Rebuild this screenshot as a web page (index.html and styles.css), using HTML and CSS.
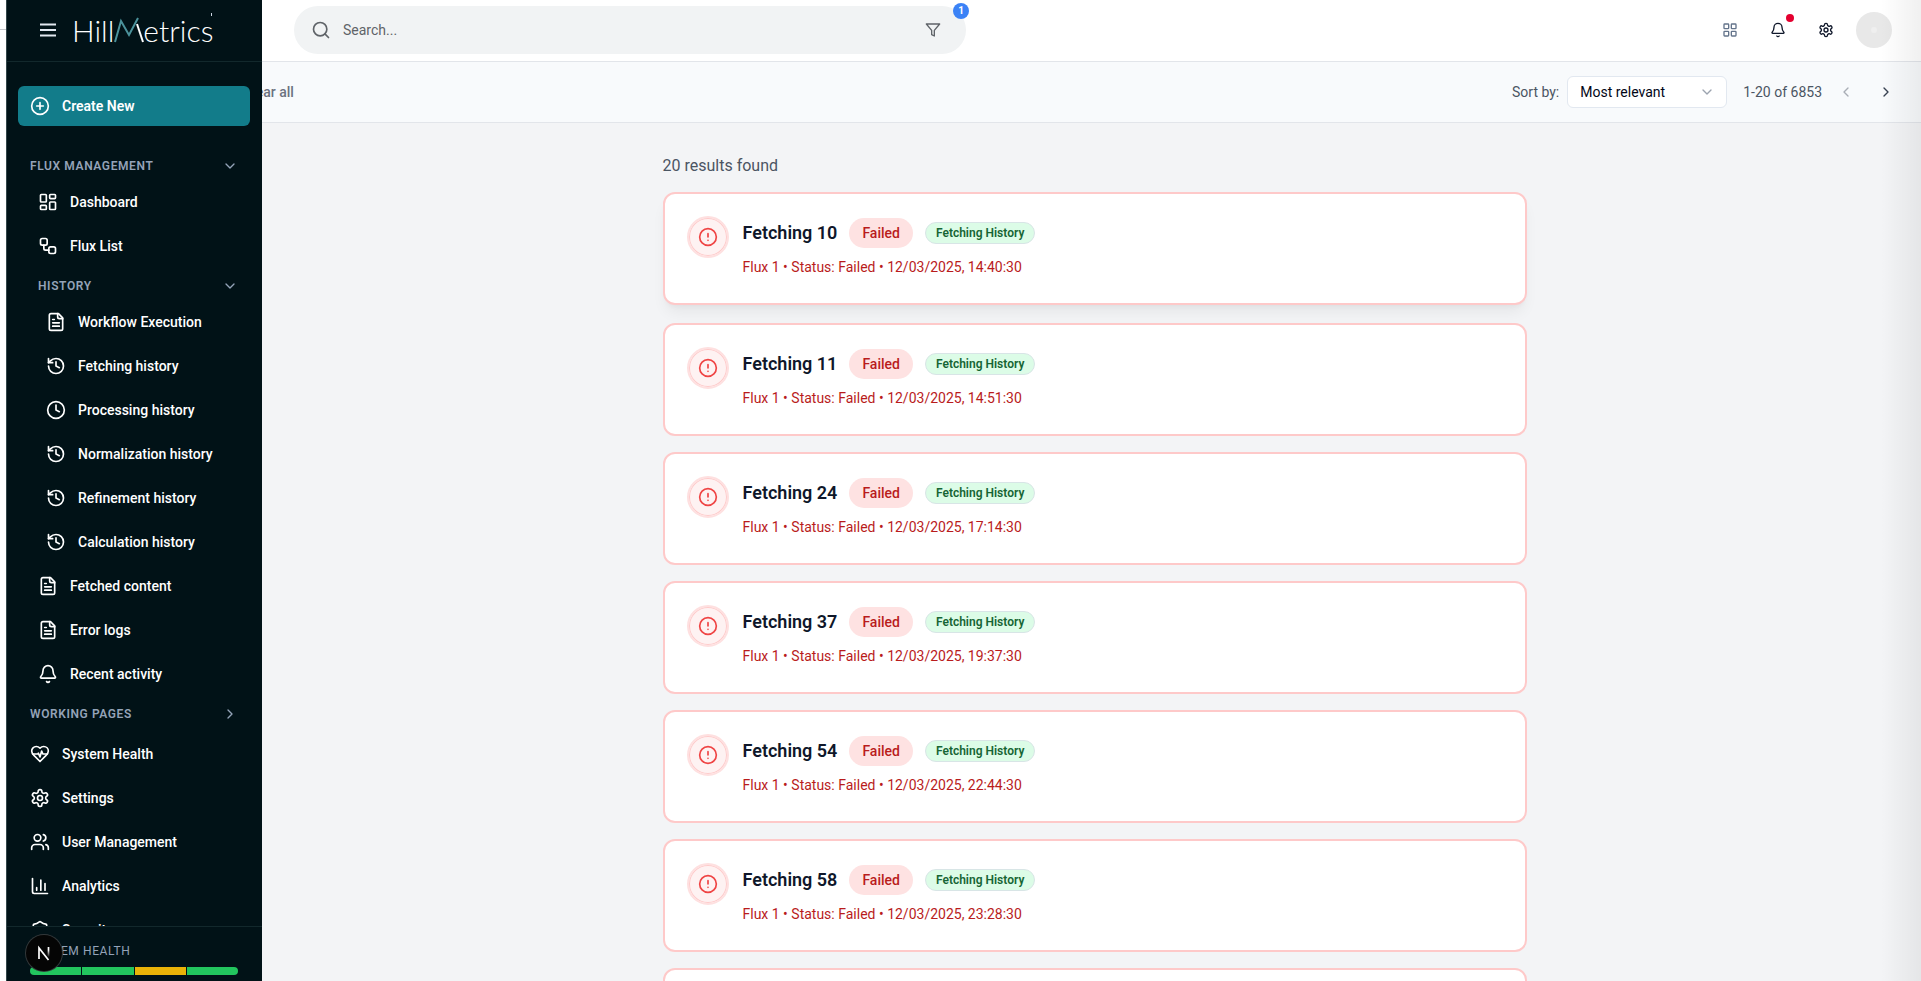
FILE: index.html
```html
<!DOCTYPE html>
<html lang="en">
<head>
<meta charset="utf-8">
<meta name="viewport" content="width=device-width, initial-scale=1">
<title>HillMetrics</title>
<link rel="stylesheet" href="styles.css">
</head>
<body>
<svg class="sprite" aria-hidden="true">
  <symbol id="i-plus" viewBox="0 0 24 24"><circle cx="12" cy="12" r="10"/><path d="M8 12h8M12 8v8"/></symbol>
  <symbol id="i-down" viewBox="0 0 24 24"><path d="m6 9 6 6 6-6"/></symbol>
  <symbol id="i-right" viewBox="0 0 24 24"><path d="m9 18 6-6-6-6"/></symbol>
  <symbol id="i-left" viewBox="0 0 24 24"><path d="m15 18-6-6 6-6"/></symbol>
  <symbol id="i-dashboard" viewBox="0 0 24 24"><rect width="7" height="9" x="3" y="3" rx="1"/><rect width="7" height="5" x="14" y="3" rx="1"/><rect width="7" height="9" x="14" y="12" rx="1"/><rect width="7" height="5" x="3" y="16" rx="1"/></symbol>
  <symbol id="i-flow" viewBox="0 0 24 24"><rect width="8" height="8" x="3" y="3" rx="2"/><path d="M7 11v4a2 2 0 0 0 2 2h4"/><rect width="8" height="8" x="13" y="13" rx="2"/></symbol>
  <symbol id="i-file" viewBox="0 0 24 24"><path d="M15 2H6a2 2 0 0 0-2 2v16a2 2 0 0 0 2 2h12a2 2 0 0 0 2-2V7Z"/><path d="M14 2v4a2 2 0 0 0 2 2h4M10 9H8M16 13H8M16 17H8"/></symbol>
  <symbol id="i-history" viewBox="0 0 24 24"><path d="M3 12a9 9 0 1 0 9-9 9.75 9.75 0 0 0-6.74 2.74L3 8"/><path d="M3 3v5h5M12 7v5l4 2"/></symbol>
  <symbol id="i-clock" viewBox="0 0 24 24"><circle cx="12" cy="12" r="10"/><path d="M12 6v6l4 2"/></symbol>
  <symbol id="i-bell" viewBox="0 0 24 24"><path d="M10.268 21a2 2 0 0 0 3.464 0"/><path d="M3.262 15.326A1 1 0 0 0 4 17h16a1 1 0 0 0 .74-1.673C19.41 13.956 18 12.499 18 8A6 6 0 0 0 6 8c0 4.499-1.411 5.956-2.738 7.326"/></symbol>
  <symbol id="i-heart" viewBox="0 0 24 24"><path d="M19 14c1.49-1.46 3-3.21 3-5.5A5.5 5.5 0 0 0 16.5 3c-1.76 0-3 .5-4.5 2-1.5-1.5-2.74-2-4.5-2A5.5 5.5 0 0 0 2 8.5c0 2.3 1.5 4.05 3 5.5l7 7Z"/><path d="M3.22 12H9.5l.5-1 2 4.5 2-7 1.5 3.5h5.27"/></symbol>
  <symbol id="i-gear" viewBox="0 0 24 24"><path d="M12.22 2h-.44a2 2 0 0 0-2 2v.18a2 2 0 0 1-1 1.73l-.43.25a2 2 0 0 1-2 0l-.15-.08a2 2 0 0 0-2.73.73l-.22.38a2 2 0 0 0 .73 2.73l.15.1a2 2 0 0 1 1 1.72v.51a2 2 0 0 1-1 1.74l-.15.09a2 2 0 0 0-.73 2.73l.22.38a2 2 0 0 0 2.73.73l.15-.08a2 2 0 0 1 2 0l.43.25a2 2 0 0 1 1 1.73V20a2 2 0 0 0 2 2h.44a2 2 0 0 0 2-2v-.18a2 2 0 0 1 1-1.73l.43-.25a2 2 0 0 1 2 0l.15.08a2 2 0 0 0 2.73-.73l.22-.39a2 2 0 0 0-.73-2.73l-.15-.08a2 2 0 0 1-1-1.74v-.5a2 2 0 0 1 1-1.74l.15-.09a2 2 0 0 0 .73-2.73l-.22-.38a2 2 0 0 0-2.73-.73l-.15.08a2 2 0 0 1-2 0l-.43-.25a2 2 0 0 1-1-1.73V4a2 2 0 0 0-2-2z"/><circle cx="12" cy="12" r="3"/></symbol>
  <symbol id="i-users" viewBox="0 0 24 24"><path d="M16 21v-2a4 4 0 0 0-4-4H6a4 4 0 0 0-4 4v2"/><circle cx="9" cy="7" r="4"/><path d="M22 21v-2a4 4 0 0 0-3-3.870M16 3.130a4 4 0 0 1 0 7.750"/></symbol>
  <symbol id="i-chart" viewBox="0 0 24 24"><path d="M3 3v16a2 2 0 0 0 2 2h16M18 17V9M13 17V5M8 17v-3"/></symbol>
  <symbol id="i-shield" viewBox="0 0 24 24"><path d="M20 13c0 5-3.5 7.5-7.66 8.95a1 1 0 0 1-.67-.01C7.5 20.5 4 18 4 13V6a1 1 0 0 1 1-1c2 0 4.500-1.200 6.240-2.720a1.170 1.170 0 0 1 1.520 0C14.510 3.810 17 5 19 5a1 1 0 0 1 1 1z"/></symbol>
  <symbol id="i-search" viewBox="0 0 24 24"><circle cx="11" cy="11" r="8"/><path d="m21 21-4.300-4.300"/></symbol>
  <symbol id="i-filter" viewBox="0 0 24 24"><path d="M22 3H2l8 9.460V19l4 2v-8.540z"/></symbol>
  <symbol id="i-grid" viewBox="0 0 24 24"><rect width="7" height="7" x="3" y="3" rx="1"/><rect width="7" height="7" x="14" y="3" rx="1"/><rect width="7" height="7" x="14" y="14" rx="1"/><rect width="7" height="7" x="3" y="14" rx="1"/></symbol>
  <symbol id="i-alert" viewBox="0 0 24 24"><circle cx="12" cy="12" r="10"/><path d="M12 8v4M12 16h.01"/></symbol>
</svg>

<div class="page">
  <div class="gutter"><span class="gutter-line"></span></div>
  <div class="app">
    <aside class="sidebar">
      <div class="brand">
        <button class="menu-button" type="button" aria-label="Toggle menu">
          <svg class="menu-icon" viewBox="0 0 16 16"><path d="M0 2.500h16M0 8h16M0 13.500h16"/></svg>
        </button>
        <a class="logo" href="#" aria-label="HillMetrics">
          <span>Hill</span><svg class="logo-m" viewBox="0 0 28 28"><path class="logo-teal" d="M1 26 7 5l8 14L24 2"/><path class="logo-white" d="M23 8l6 18"/></svg><span>etrics</span>
        </a>
      </div>
      <div class="nav-scroll">
        <button class="create" type="button"><svg class="icon"><use href="#i-plus"/></svg>Create New</button>
        <nav class="nav">
          <button class="group" type="button">Flux Management<svg class="icon icon-sm"><use href="#i-down"/></svg></button>
          <ul class="items level-2">
            <li><a class="item" href="#"><svg class="icon"><use href="#i-dashboard"/></svg>Dashboard</a></li>
            <li><a class="item" href="#"><svg class="icon"><use href="#i-flow"/></svg>Flux List</a></li>
            <li>
              <button class="group" type="button">History<svg class="icon icon-sm"><use href="#i-down"/></svg></button>
              <ul class="items level-3">
                <li><a class="item" href="#"><svg class="icon"><use href="#i-file"/></svg>Workflow Execution</a></li>
                <li><a class="item" href="#"><svg class="icon"><use href="#i-history"/></svg>Fetching history</a></li>
                <li><a class="item" href="#"><svg class="icon"><use href="#i-clock"/></svg>Processing history</a></li>
                <li><a class="item" href="#"><svg class="icon"><use href="#i-history"/></svg>Normalization history</a></li>
                <li><a class="item" href="#"><svg class="icon"><use href="#i-history"/></svg>Refinement history</a></li>
                <li><a class="item" href="#"><svg class="icon"><use href="#i-history"/></svg>Calculation history</a></li>
              </ul>
            </li>
            <li><a class="item" href="#"><svg class="icon"><use href="#i-file"/></svg>Fetched content</a></li>
            <li><a class="item" href="#"><svg class="icon"><use href="#i-file"/></svg>Error logs</a></li>
            <li><a class="item" href="#"><svg class="icon"><use href="#i-bell"/></svg>Recent activity</a></li>
          </ul>
          <ul class="items level-1">
            <li><button class="group" type="button">Working Pages<svg class="icon icon-sm"><use href="#i-right"/></svg></button></li>
            <li><a class="item" href="#"><svg class="icon"><use href="#i-heart"/></svg>System Health</a></li>
            <li><a class="item" href="#"><svg class="icon"><use href="#i-gear"/></svg>Settings</a></li>
            <li><a class="item" href="#"><svg class="icon"><use href="#i-users"/></svg>User Management</a></li>
            <li><a class="item" href="#"><svg class="icon"><use href="#i-chart"/></svg>Analytics</a></li>
            <li><a class="item" href="#"><svg class="icon"><use href="#i-shield"/></svg>Security</a></li>
          </ul>
        </nav>
      </div>
      <div class="health">
        <div class="health-title">SYSTEM HEALTH</div>
        <div class="health-bar"><span></span><span></span><span class="warn"></span><span></span></div>
        <button class="dev-badge" type="button" aria-label="Developer tools">
          <svg viewBox="0 0 36 36">
            <defs>
              <linearGradient id="fade" gradientUnits="userSpaceOnUse" x1="0" y1="12" x2="0" y2="22"><stop offset="0.300" stop-color="#fff"/><stop offset="1" stop-color="#fff" stop-opacity="0"/></linearGradient>
            </defs>
            <path d="M13 24V13L22.500 25" fill="none" stroke="#fff" stroke-width="1.700"/>
            <path d="M22.500 12v10" fill="none" stroke="url(#fade)" stroke-width="1.700"/>
          </svg>
        </button>
      </div>
    </aside>

    <div class="content">
      <header class="topbar">
        <form class="search" role="search">
          <svg class="icon"><use href="#i-search"/></svg>
          <input class="search-input" type="text" placeholder="Search..." aria-label="Search">
          <button class="filter" type="button" aria-label="Filters"><svg class="icon icon-sm"><use href="#i-filter"/></svg></button>
          <span class="count">1</span>
        </form>
        <div class="actions">
          <button class="action muted" type="button" aria-label="Apps"><svg class="icon icon-sm"><use href="#i-grid"/></svg></button>
          <button class="action" type="button" aria-label="Notifications"><svg class="icon icon-sm"><use href="#i-bell"/></svg><span class="dot"></span></button>
          <button class="action" type="button" aria-label="Settings"><svg class="icon icon-sm"><use href="#i-gear"/></svg></button>
          <button class="avatar" type="button" aria-label="Account"><span></span></button>
        </div>
      </header>

      <div class="toolbar">
        <button class="clear" type="button">Clear all</button>
        <div class="sorting">
          <label for="sort">Sort by:</label>
          <span class="select-box">
            <select id="sort" class="select"><option>Most relevant</option></select>
            <svg class="icon icon-sm"><use href="#i-down"/></svg>
          </span>
          <span class="range">1-20 of 6853</span>
          <button class="pager" type="button" aria-label="Previous page" disabled><svg class="icon icon-sm"><use href="#i-left"/></svg></button>
          <button class="pager" type="button" aria-label="Next page"><svg class="icon icon-sm"><use href="#i-right"/></svg></button>
        </div>
      </div>

      <main class="results">
        <p class="found">20 results found</p>
        <article class="card raised"><span class="status"><svg class="icon"><use href="#i-alert"/></svg></span><div class="info"><div class="head"><h2>Fetching 10</h2><span class="failed">Failed</span><span class="kind">Fetching History</span></div><p>Flux 1 • Status: Failed • 12/03/2025, 14:40:30</p></div></article>
        <article class="card"><span class="status"><svg class="icon"><use href="#i-alert"/></svg></span><div class="info"><div class="head"><h2>Fetching 11</h2><span class="failed">Failed</span><span class="kind">Fetching History</span></div><p>Flux 1 • Status: Failed • 12/03/2025, 14:51:30</p></div></article>
        <article class="card"><span class="status"><svg class="icon"><use href="#i-alert"/></svg></span><div class="info"><div class="head"><h2>Fetching 24</h2><span class="failed">Failed</span><span class="kind">Fetching History</span></div><p>Flux 1 • Status: Failed • 12/03/2025, 17:14:30</p></div></article>
        <article class="card"><span class="status"><svg class="icon"><use href="#i-alert"/></svg></span><div class="info"><div class="head"><h2>Fetching 37</h2><span class="failed">Failed</span><span class="kind">Fetching History</span></div><p>Flux 1 • Status: Failed • 12/03/2025, 19:37:30</p></div></article>
        <article class="card"><span class="status"><svg class="icon"><use href="#i-alert"/></svg></span><div class="info"><div class="head"><h2>Fetching 54</h2><span class="failed">Failed</span><span class="kind">Fetching History</span></div><p>Flux 1 • Status: Failed • 12/03/2025, 22:44:30</p></div></article>
        <article class="card"><span class="status"><svg class="icon"><use href="#i-alert"/></svg></span><div class="info"><div class="head"><h2>Fetching 58</h2><span class="failed">Failed</span><span class="kind">Fetching History</span></div><p>Flux 1 • Status: Failed • 12/03/2025, 23:28:30</p></div></article>
        <article class="card"></article>
      </main>
    </div>
  </div>
  <div class="edge-shade"></div>
</div>
</body>
</html>
```

FILE: styles.css
```css
* { box-sizing: border-box; }

body {
  margin: 0;
  font-family: Roboto, "Liberation Sans", sans-serif;
  font-size: 14px;
  line-height: 20px;
  color: #0f172a;
  background: #fff;
}

button {
  font: inherit;
  color: inherit;
  background: none;
  border: 0;
  padding: 0;
}

a { color: inherit; text-decoration: none; }
ul { list-style: none; margin: 0; padding: 0; }
h2, p { margin: 0; }

.sprite { display: none; }

.icon {
  flex: none;
  width: 20px;
  height: 20px;
  fill: none;
  stroke: currentColor;
  stroke-width: 2;
  stroke-linecap: round;
  stroke-linejoin: round;
}
.icon-sm { width: 16px; height: 16px; }

.page {
  position: relative;
  display: flex;
  height: 100vh;
  overflow: hidden;
}

.gutter { flex: none; width: 6px; padding-top: 29px; }
.gutter-line { display: block; height: 1px; background: #c4c6ca; }

.app { flex: 0 0 100%; display: flex; min-width: 0; }

/* Sidebar */
.sidebar {
  position: relative;
  z-index: 1;
  flex: none;
  display: flex;
  flex-direction: column;
  width: 256px;
  color: #fff;
  background: #011217;
  border-left: 1px solid #33464a;
}

.brand {
  flex: none;
  display: flex;
  align-items: center;
  gap: 16px;
  height: 62px;
  padding: 0 0 1px 33px;
  border-bottom: 1px solid #12282c;
}
.menu-icon {
  display: block;
  width: 16px;
  height: 16px;
  stroke: #e2e8f0;
  stroke-width: 2;
}
.logo {
  position: relative;
  display: flex;
  align-items: center;
  font-family: Lato, sans-serif;
  font-weight: 300;
  font-size: 30px;
  line-height: 36px;
}
.logo::after {
  content: "";
  position: absolute;
  top: 1px;
  right: 1px;
  width: 1px;
  height: 3px;
  background: #cbd5e1;
}
.logo-m { width: 28px; height: 28px; margin: 0 1px 0 0; overflow: visible; fill: none; stroke-width: 2; }
.logo-teal { stroke: #4b929b; }
.logo-white { stroke: #fff; }

.nav-scroll { flex: 1; min-height: 0; overflow: hidden; padding: 24px 12px 0 11px; }

.create {
  display: flex;
  align-items: center;
  gap: 12px;
  width: 100%;
  height: 40px;
  padding: 0 12px;
  border-radius: 6px;
  background: #127c8a;
  font-weight: 600;
}

.nav { padding: 24px 12px 0; }
.group {
  display: flex;
  align-items: center;
  justify-content: space-between;
  width: 100%;
  height: 32px;
  color: #94a3b8;
  font-size: 12px;
  font-weight: 600;
  letter-spacing: 0.600px;
  text-transform: uppercase;
}
.items { display: flex; flex-direction: column; gap: 4px; }
.level-1 { padding-top: 4px; }
.level-2 { padding-left: 8px; }
.level-3 { padding-left: 8px; }
.item {
  display: flex;
  align-items: center;
  gap: 12px;
  height: 40px;
  font-weight: 500;
  white-space: nowrap;
}

.health {
  position: relative;
  flex: none;
  padding: 14px 24px 6px 23px;
  border-top: 1px solid #12282c;
}
.health-title { color: #94a3b8; font-size: 12px; letter-spacing: 0.600px; }
.health-bar {
  display: flex;
  gap: 1px;
  height: 8px;
  margin-top: 6px;
  border-radius: 4px;
  overflow: hidden;
}
.health-bar span { flex: 1; background: #22c55e; }
.health-bar .warn { background: #eab308; }
.dev-badge {
  position: absolute;
  left: 19px;
  top: 8px;
  width: 36px;
  height: 36px;
  border-radius: 50%;
  background: #050505;
  box-shadow: 0 0 0 1px #33383a;
}
.dev-badge svg { display: block; }

/* Content */
.content {
  flex: 1;
  min-width: 0;
  display: flex;
  flex-direction: column;
  background: #f3f4f6;
}

.topbar {
  flex: none;
  display: flex;
  align-items: center;
  justify-content: space-between;
  height: 62px;
  padding: 0 35px 1px 32px;
  background: #fff;
  border-bottom: 1px solid #e2e5ea;
}

.search {
  position: relative;
  display: flex;
  align-items: center;
  gap: 12px;
  flex: 0 1 672px;
  height: 48px;
  padding: 0 25px 0 17px;
  border-radius: 24px;
  background: #f1f3f4;
  color: #5f6368;
}
.search-input {
  flex: 1;
  min-width: 0;
  border: 0;
  padding: 0;
  background: none;
  font: inherit;
  color: inherit;
}
.search-input::placeholder { color: #5f6368; opacity: 1; }
.filter { display: flex; }
.count {
  position: absolute;
  top: -3px;
  right: -3px;
  width: 16px;
  height: 16px;
  border-radius: 50%;
  background: #3b82f6;
  color: #fff;
  font-size: 10px;
  font-weight: 700;
  line-height: 16px;
  text-align: center;
}

.actions { display: flex; align-items: center; gap: 8px; }
.action {
  position: relative;
  display: flex;
  align-items: center;
  justify-content: center;
  width: 40px;
  height: 40px;
}
.muted { color: #64748b; }
.dot {
  position: absolute;
  top: 4px;
  right: 4px;
  width: 8px;
  height: 8px;
  border-radius: 50%;
  background: #e4002f;
}
.avatar {
  display: flex;
  align-items: center;
  justify-content: center;
  width: 36px;
  height: 36px;
  margin-left: 2px;
  border-radius: 50%;
  background: #e8e8e8;
}
.avatar span { width: 6px; height: 6px; border-radius: 50%; background: #efefef; }

/* The toolbar runs on beneath the sidebar */
.toolbar {
  flex: none;
  display: flex;
  align-items: center;
  justify-content: space-between;
  height: 61px;
  margin-left: -256px;
  padding: 0 33px 0 237px;
  background: #f8fafc;
  border-bottom: 1px solid #e2e5ea;
  color: #4b5563;
}
.clear { color: #6b7280; font-weight: 500; }
.sorting { display: flex; align-items: center; }
.sorting label { margin-right: 8px; }
.select-box { position: relative; display: flex; align-items: center; color: #9ca3af; }
.select-box .icon { position: absolute; right: 12px; pointer-events: none; }
.select {
  appearance: none;
  width: 160px;
  height: 32px;
  padding: 0 12px;
  border: 1px solid #e2e8f0;
  border-radius: 6px;
  background: #fff;
  color: #020617;
  font: inherit;
}
.range { margin: 0 16px; }
.pager { display: flex; color: #374151; }
.pager + .pager { margin-left: 24px; }
.pager:disabled { color: #a8adb5; }

.results {
  width: 100%;
  max-width: 896px;
  margin: 0 auto;
  padding: 31px 16px 0;
  min-height: 0;
}
.found { margin-bottom: 14px; font-size: 16px; line-height: 24px; color: #4b5563; }

.card {
  display: flex;
  gap: 14px;
  min-height: 113px;
  margin-bottom: 16px;
  padding: 22px;
  border: 2px solid #fec9c9;
  border-radius: 12px;
  background: #fff;
}
.raised {
  margin-bottom: 18px;
  box-shadow: 0 10px 15px -3px rgba(0, 0, 0, 0.060), 0 4px 6px -4px rgba(0, 0, 0, 0.060);
}
.status {
  flex: none;
  display: flex;
  align-items: center;
  justify-content: center;
  width: 42px;
  height: 42px;
  border: 2px solid #fee0e0;
  border-radius: 50%;
  background: #fef2f2;
  box-shadow: inset 0 0 0 1px #fecaca;
  color: #ef4444;
}
.head { display: flex; align-items: center; gap: 12px; height: 34px; }
.head h2 { font-size: 18px; font-weight: 600; line-height: 28px; }
.failed {
  padding: 5px 13px;
  border-radius: 15px;
  background: #fee2e2;
  color: #b91c1c;
  font-weight: 500;
}
.kind {
  padding: 2px 10px;
  border: 1px solid #d8e5e6;
  border-radius: 11px;
  background: #dcfce7;
  color: #166534;
  font-size: 12px;
  font-weight: 600;
  line-height: 16px;
}
.info p { margin-top: 7px; color: #b91c1c; }

/* Soft shade along the right window edge */
.edge-shade {
  position: absolute;
  top: 0;
  right: 0;
  bottom: 0;
  width: 40px;
  background: linear-gradient(to right, rgba(0, 0, 0, 0), rgba(0, 0, 0, 0.060));
  pointer-events: none;
}
```
